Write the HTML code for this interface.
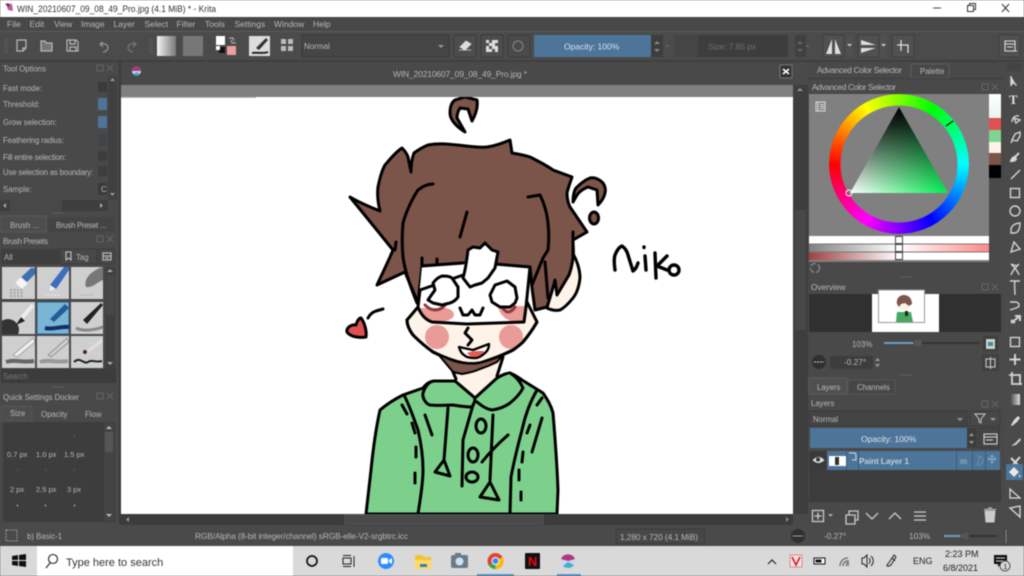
<!DOCTYPE html>
<html><head><meta charset="utf-8"><style>
html,body{margin:0;padding:0;width:1024px;height:576px;overflow:hidden;background:#4a4a4a}
#wrap{position:relative;width:1024px;height:576px;filter:blur(.5px);overflow:hidden}
svg{position:absolute;left:0;top:0}
text{font-family:"Liberation Sans",sans-serif;font-size:7.800px;fill:#b8b8b8}
#wheel{position:absolute;left:829px;top:94px;width:140px;height:140px;border-radius:50%;background:conic-gradient(from 270deg,#f00,#ff0,#0f0,#0ff,#00f,#f0f,#f00);-webkit-mask:radial-gradient(circle,transparent 58px,#000 59px);mask:radial-gradient(circle,transparent 58px,#000 59px)}
</style></head><body><div id="wrap">
<svg width="1024" height="576" viewBox="0 0 1024 576">
<defs>
<linearGradient id="bw" x1="0" x2="1" y1="0" y2="0"><stop offset="0" stop-color="#f4f4f4"/><stop offset="1" stop-color="#777"/></linearGradient>
<linearGradient id="s2" x1="0" x2="1"><stop offset="0" stop-color="#808080"/><stop offset=".5" stop-color="#fff"/><stop offset="1" stop-color="#f88"/></linearGradient>
<linearGradient id="s3" x1="0" x2="1"><stop offset="0" stop-color="#a04040"/><stop offset=".5" stop-color="#fff"/><stop offset="1" stop-color="#fff"/></linearGradient>
<linearGradient id="sw" x1="0" x2="0" y1="0" y2="1"><stop offset="0" stop-color="#fff"/><stop offset="1" stop-color="#e8f6ef"/></linearGradient>
<linearGradient id="ramp" x1="0" x2="1"><stop offset="0" stop-color="#444"/><stop offset="1" stop-color="#ddd"/></linearGradient>
<linearGradient id="tg" x1="0" x2="1"><stop offset="0" stop-color="#fff"/><stop offset="1" stop-color="#00ef50"/></linearGradient>
<linearGradient id="tb" x1="0" x2="0" y1="0" y2="1"><stop offset="0" stop-color="#000"/><stop offset=".2" stop-color="#000" stop-opacity=".85"/><stop offset="1" stop-color="#000" stop-opacity="0"/></linearGradient>
<clipPath id="cv"><rect x="122" y="97" width="671" height="417"/></clipPath>
<clipPath id="c1"><rect x="2" y="302" width="33" height="32"/></clipPath>
<clipPath id="cb"><rect x="435" y="312" width="90" height="10"/><rect x="400" y="324" width="170" height="40"/></clipPath>
</defs>

<!-- title bar -->
<rect width="1024" height="17" fill="#fff"/>
<path d="M6 3l6 1 1 7-5-1z" fill="#c05a9a"/><path d="M5 4l4 0 0 3z" fill="#333"/>
<text x="17" y="12" textLength="199" lengthAdjust="spacingAndGlyphs" style="font-size:9.600px;fill:#333">WIN_20210607_09_08_49_Pro.jpg (4.1 MiB)  * - Krita</text>
<path d="M933 8h8" stroke="#444"/><path d="M967.500 5.500h6v6h-6zM969.500 5.500v-2h6v6h-2" fill="none" stroke="#333"/><path d="M1002 4l7 8M1009 4l-7 8" stroke="#333" fill="none"/>

<!-- menu -->
<rect y="17" width="1024" height="14" fill="#484848"/>
<rect y="31" width="1024" height="1" fill="#5c5c5c"/>
<text x="7" y="27" style="font-size:8.500px">File</text><text x="29.500" y="27" style="font-size:8.500px">Edit</text><text x="54" y="27" style="font-size:8.500px">View</text><text x="81" y="27" style="font-size:8.500px">Image</text><text x="113.500" y="27" style="font-size:8.500px">Layer</text><text x="144.500" y="27" style="font-size:8.500px">Select</text><text x="176.500" y="27" style="font-size:8.500px">Filter</text><text x="205" y="27" style="font-size:8.500px">Tools</text><text x="234.500" y="27" style="font-size:8.500px">Settings</text><text x="274" y="27" style="font-size:8.500px">Window</text><text x="313" y="27" style="font-size:8.500px">Help</text>

<!-- toolbar -->
<rect y="32" width="1024" height="28" fill="#4b4b4b"/>
<rect y="60" width="1024" height="2" fill="#3f3f3f"/>
<path d="M5 39v16M7 39v16M150 39v16M152 39v16" stroke="#666" stroke-dasharray="1 1"/>
<g fill="none" stroke="#b8b8b8" stroke-width="1.200">
<path d="M17 40h9v8l-3 3h-6zM26 48h-3v3"/>
<path d="M41 41h4l1 2h6v8H41z" fill="#c8c8c8" fill-opacity=".35"/>
<path d="M67 40h9l2 2v9H67zM70 40v4h5v-4M70 51v-4h6v4"/>
<path d="M103 42l-3 2 3 3M100 44h4c5 0 6 7-1 8" stroke="#999"/>
<path d="M133 42l3 2-3 3M136 44h-4c-5 0-6 7 1 8" stroke="#777"/>
</g>
<rect x="157" y="36" width="19" height="20" fill="url(#bw)"/>
<rect x="183" y="36" width="20" height="20" fill="#777"/>
<rect x="216" y="36" width="9" height="9" fill="#fff"/>
<rect x="219" y="47" width="6" height="6" fill="#111"/><rect x="216" y="46" width="4" height="4" fill="#fff"/>
<rect x="227" y="46" width="9" height="9" fill="#eda0a0"/>
<path d="M229 38h4l1 3M236 43h-4l-1-3" stroke="#bbb" fill="none"/>
<rect x="249" y="36" width="21" height="20" fill="#ddd"/><path d="M252 53c5-1 12 1 16-1" stroke="#222" stroke-width="2" fill="none"/><path d="M256 48l10-10 2 2-9 10z" fill="#333"/>
<g fill="#bbb"><rect x="281" y="39" width="5" height="5"/><rect x="288" y="39" width="5" height="5"/><rect x="281" y="46" width="5" height="5"/><rect x="288" y="46" width="5" height="5"/></g>
<rect x="302" y="35" width="147" height="22" fill="#454545" stroke="#3a3a3a"/>
<text x="304" y="49" style="font-size:8px">Normal</text>
<path d="M438 45h6l-3 3z" fill="#999"/>
<rect x="454" y="35" width="22" height="22" fill="#4d4d4d" stroke="#3d3d3d"/><path d="M460 47l6-6 5 3-6 6zM459 50h12" fill="#ddd" stroke="#ddd" stroke-width=".8"/>
<rect x="481" y="35" width="22" height="22" fill="#4d4d4d" stroke="#3d3d3d"/><rect x="486" y="40" width="12" height="12" fill="#ddd"/><path d="M489 40h3v3h-3zM495 43h3v3h-3zM489 46h3v3h-3zM492 49h3v3h-3zM486 43h3v3h-3z" fill="#555"/>
<rect x="508" y="35" width="22" height="22" fill="#4a4a4a" stroke="#3d3d3d"/><circle cx="518" cy="46" r="5" fill="none" stroke="#888"/>
<rect x="534" y="35" width="117" height="22" fill="#4d7499"/>
<text x="564" y="49.500" style="font-size:8.500px;fill:#d8e2ec">Opacity:  100%</text>
<rect x="651" y="35" width="12" height="22" fill="#3d3d3d"/><path d="M654 44l3-3 3 3zM654 49h6l-3 3z" fill="#888"/><path d="M666 46h3" stroke="#777"/>
<rect x="674" y="35" width="114" height="22" fill="#3d3d3d"/><rect x="674" y="35" width="24" height="22" fill="#454545"/>
<text x="708" y="49.500" textLength="48" style="font-size:8.500px;fill:#6f6f6f">Size: 7.85 px</text>
<rect x="795" y="35" width="11" height="22" fill="#404040"/><path d="M797 44l3-3 3 3zM797 49h6l-3 3z" fill="#666"/><path d="M806 46h3" stroke="#777"/>
<rect x="823" y="35" width="21" height="22" fill="#505050" stroke="#3f3f3f"/><path d="M832 39v15h-6zM835 39v15h6z" fill="#ddd"/>
<rect x="846" y="35" width="7" height="22" fill="#505050"/><path d="M847 44h5l-2.500 2.500z" fill="#ccc"/>
<rect x="858" y="35" width="21" height="22" fill="#505050" stroke="#3f3f3f"/><path d="M861 40l15 5h-15zM861 48h15l-15 5z" fill="#ddd"/>
<rect x="880" y="35" width="7" height="22" fill="#505050"/><path d="M881 44h5l-2.500 2.500z" fill="#ccc"/>
<rect x="892" y="35" width="22" height="22" fill="#505050" stroke="#3f3f3f"/><path d="M901 40v11M897 45h11v8" fill="none" stroke="#ddd" stroke-width="1.300"/>
<rect x="999" y="35" width="21" height="22" fill="#505050" stroke="#3f3f3f"/><path d="M1005 41h10v10h-10zM1005 44h10M1007 47h6M1015 51h2" fill="none" stroke="#ddd" stroke-width="1.100"/>

<!-- left dock -->
<rect x="0" y="62" width="119" height="462" fill="#494949"/>
<rect x="119" y="62" width="2" height="462" fill="#3c3c3c"/>
<text x="3" y="71.500" textLength="43">Tool Options</text>
<g fill="none" stroke="#666"><rect x="97" y="65" width="6" height="6"/><path d="M107 65l6 6M113 65l-6 6"/><rect x="97" y="236" width="6" height="6"/><path d="M107 236l6 6M113 236l-6 6"/><rect x="97" y="393" width="6" height="6"/><path d="M107 393l6 6M113 393l-6 6"/></g>
<text x="3" y="91">Fast mode:</text><text x="3" y="107">Threshold:</text><text x="3" y="125">Grow selection:</text><text x="3" y="143" textLength="61">Feathering radius:</text><text x="3" y="160" textLength="63">Fill entire selection:</text><text x="3" y="175" textLength="90">Use selection as boundary:</text><text x="3" y="192">Sample:</text>
<rect x="98" y="82" width="9" height="10" fill="#3a3a3a"/><rect x="98" y="98" width="9" height="12" fill="#4d7499"/><rect x="98" y="116" width="9" height="12" fill="#4d7499"/><rect x="98" y="134" width="9" height="12" fill="#404548"/><rect x="98" y="151" width="9" height="10" fill="#3d3d3d"/><rect x="98" y="166" width="9" height="10" fill="#3d3d3d"/><rect x="98" y="183" width="9" height="12" fill="#3a3a3a"/>
<text x="101" y="192" style="font-size:8px">C</text>
<rect x="108" y="76" width="9" height="124" fill="#404040"/><path d="M110 81l2.500-3 2.500 3zM110 193h5l-2.500 3z" fill="#999"/>
<rect x="0" y="200" width="108" height="11" fill="#3e3e3e"/><rect x="10" y="200" width="52" height="11" fill="#484848"/><path d="M6 203v5l-3-2.500zM100 203v5l3-2.500z" fill="#aaa"/>
<path d="M52 213h12" stroke="#777" stroke-dasharray="1 1"/>
<rect x="1" y="216" width="45" height="16" fill="#4d4d4d" stroke="#5a5a5a"/>
<text x="10" y="228">Brush ...</text>
<rect x="48" y="217" width="67" height="15" fill="#444"/>
<text x="56" y="228" textLength="50">Brush Preset ...</text>
<text x="3" y="244" textLength="45">Brush Presets</text>
<rect x="1" y="249" width="59" height="15" fill="#3e3e3e"/><text x="4" y="260">All</text>
<rect x="61" y="249" width="36" height="15" fill="#484848" stroke="#3c3c3c"/><path d="M66 252h5v8l-2.500-2-2.500 2z" fill="none" stroke="#ccc"/><text x="76" y="260">Tag</text>
<rect x="99" y="249" width="15" height="15" fill="#484848" stroke="#3c3c3c"/><path d="M103 253h8v7h-8zM103 256h8M105 258h4" fill="none" stroke="#ccc"/>
<!-- presets -->
<g fill="#cfcfcf"><rect x="2" y="267" width="33" height="32"/><rect x="37" y="267" width="32" height="32"/><rect x="71" y="267" width="32" height="32"/><rect x="2" y="302" width="33" height="32"/><rect x="71" y="302" width="32" height="32"/><rect x="2" y="336" width="33" height="32"/><rect x="37" y="336" width="32" height="32"/><rect x="71" y="336" width="32" height="32"/></g>
<rect x="37" y="302" width="32" height="32" fill="#7ab5d6" stroke="#2c5d80"/>
<path d="M15 283l16-15h4v6l-14 14z" fill="#3f6fb0"/><path d="M15 283l7 6 6-6-7-6z" fill="#f4f4f4"/>
<path d="M10 290h14M10 293h14M10 296h14" stroke="#999" stroke-dasharray="2 1.500" stroke-width="1.500"/>
<path d="M50 285l14-18h5v3l-13 19z" fill="#3e6cc0"/><path d="M50 285l6 4-6 2z" fill="#eee"/><path d="M46 295h14" stroke="#fff" stroke-dasharray="1 2"/>
<path d="M86 287c-3-8 6-17 17-20v13c-6 2-10 8-17 7z" fill="#777"/><path d="M80 295h14" stroke="#aaa" stroke-dasharray="1 2" stroke-width="2"/>
<g clip-path="url(#c1)"><circle cx="8" cy="330" r="11" fill="#333"/><path d="M20 320l13-15" stroke="#eee" stroke-width="4"/><path d="M16 325l5-8 4 4z" fill="#222"/></g>
<path d="M50 319l15-15 4 4-15 14z" fill="#245c99"/><path d="M45 328c8 2 16-2 24-1" stroke="#10306a" stroke-width="4" fill="none"/>
<path d="M83 320l18-17 2 2-16 19z" fill="#222"/><path d="M76 328c8 4 18 2 27-1" stroke="#888" stroke-width="3" fill="none"/>
<path d="M13 355l20-17 2 4-18 15z" fill="#eee" stroke="#888" stroke-width=".6"/><path d="M6 362c8-3 18 1 28-1" stroke="#666" stroke-width="4" fill="none"/>
<path d="M48 355l19-17 2 4-18 15z" fill="#ccc" stroke="#777" stroke-width=".6"/><path d="M40 362c8-3 18 1 28-1" stroke="#999" stroke-width="4" fill="none"/>
<path d="M84 352l18-14 1 4-16 12z" fill="#ddd"/><circle cx="85" cy="352" r="2" fill="#522"/><path d="M74 362c6-6 10 3 14 0s8 1 14-1" stroke="#222" stroke-width="2" fill="none"/>
<rect x="105" y="267" width="10" height="102" fill="#3f3f3f"/><rect x="106" y="275" width="8" height="40" fill="#484848"/><path d="M107 272l3-3 3 3zM107 362h6l-3 3z" fill="#aaa"/>
<rect x="1" y="369" width="115" height="14" fill="#3c3c3c"/><text x="3" y="379" style="fill:#777">Search</text>
<path d="M53 387h12" stroke="#777" stroke-dasharray="1 1"/>
<text x="3" y="400" textLength="76">Quick Settings Docker</text>
<rect x="1" y="406" width="31" height="15" fill="#4d4d4d" stroke="#555"/>
<text x="10" y="416">Size</text><text x="41" y="417">Opacity</text><text x="85" y="417">Flow</text>
<rect x="3" y="422" width="112" height="100" fill="#3d3d3d"/>
<text x="7" y="457" style="font-size:7.500px">0.7 px</text><text x="36" y="457" style="font-size:7.500px">1.0 px</text><text x="64" y="457" style="font-size:7.500px">1.5 px</text><text x="10" y="492" style="font-size:7.500px">2 px</text><text x="36" y="492" style="font-size:7.500px">2.5 px</text><text x="67" y="492" style="font-size:7.500px">3 px</text>
<path d="M17 505.500h1M45 505.500h1M74 505.500h1" stroke="#ddd" stroke-width="1.500"/>
<path d="M74 436h1M17 470h1M45 470h1M74 470h1" stroke="#777"/>
<rect x="104" y="423" width="10" height="98" fill="#444"/><rect x="105" y="432" width="8" height="20" fill="#555"/><path d="M106 429l3-3 3 3zM106 514h6l-3 3z" fill="#bbb"/>

<!-- canvas -->
<rect x="121" y="62" width="672" height="23" fill="#494949"/>
<circle cx="136.500" cy="71" r="4.500" fill="#d4d4f0"/><path d="M132 71a4.500 4.500 0 0 1 9 0z" fill="#b0387a"/><path d="M133 74a4.500 4.500 0 0 0 7 0l-3-2z" fill="#35b6c8"/>
<text x="393" y="77" textLength="134" style="font-size:8.500px;fill:#b4b4b4">WIN_20210607_09_08_49_Pro.jpg *</text>
<rect x="780" y="65" width="12" height="13" fill="#333" stroke="#777"/><path d="M783 69l6 5M789 69l-6 5" stroke="#fff" stroke-width="1.600"/>
<rect x="121" y="85" width="672" height="429" fill="#fff"/>
<rect x="121" y="85" width="672" height="12" fill="#808080"/>
<rect x="121" y="97" width="135" height="1" fill="#bbb"/>

<g clip-path="url(#cv)" stroke="#000" stroke-width="3" stroke-linejoin="round" stroke-linecap="round">
<!-- ear -->
<path d="M572 252c5 8 8 18 8 26-1 9-3 15-7 20-4 5-9 10-13 12-5 1-9 0-13-2l10-40z" fill="#fdf3e8"/>
<!-- neck -->
<path d="M441 353l14 26 18 18 24-19 7-20-30 6z" fill="#fdf3e8" stroke="none"/>
<!-- face -->
<path d="M418 307l-11 13c0 6 3 11 6 15 6 6 13 12 20 17 10 5 20 9 30 11 7 1 14 1 20-1 10-3 20-7 30-12 4-3 7-5 10-8 5-6 10-13 14-20l-10-20H420z" fill="#fdf3e8"/>
<!-- lower blush -->
<g stroke="none" fill="#e99b98" clip-path="url(#cb)"><circle cx="437" cy="337" r="12"/><circle cx="511" cy="337" r="12"/></g>
<path d="M407 320c0 6 3 11 6 15 6 6 13 12 20 17 10 5 20 9 30 11 7 1 14 1 20-1 10-3 20-7 30-12 4-3 7-5 10-8 5-6 10-13 14-20" fill="none"/>
<!-- neck shadow -->
<path d="M438 354c8 4 16 8 25 9 7 1 14 1 20-1 7-2 14-4 20-7l-6 7c-6 3-11 5-17 7-6 3-12 4-18 5l-9-2z" fill="#7b5549" stroke-width="2"/>
<path d="M503 357l-6 19M453 372l3 7" fill="none"/>
<!-- hair -->
<path d="M350 197C360 203 370 207 380 211C378 203 377 195 378 187C380 177 382 170 385 165C391 158 396 152 402 148C405 151 407 154 408 157L411 172C411 165 412 158 414 153C418 150 423 147 428 145C438 143 448 144 457 145C468 146 478 148 487 147C495 146 503 143 510 140L512 153C518 154 524 155 530 157C538 161 546 165 553 170L572 177C570 183 568 188 567 193C567 198 568 203 570 207L587 232L573 240C573 247 574 252 573 258C572 265 571 270 569 275L557 295L555 280C553 288 550 298 547 307L535 310L532 288L530 267L463 263L422 266L418 303L405 272L377 285C383 272 388 262 393 250Z" fill="#7b5549"/>
<!-- mask -->
<path d="M422 266L463 263L530 267L526 307L524 322L467 324L432 322L418 307Z" fill="#fff" stroke="none"/>
<g stroke="none" fill="#e99b98"><path d="M419 308h27a14 7 0 0 1-13 13h-5z"/><path d="M498 306h28l-2 15h-13c-7-2-12-8-13-15z"/></g>
<path d="M422 266L463 263M495 264L530 267L526 307L524 322L467 324L432 322C426 320 421 315 418 307L420 290z" fill="none"/>
<path d="M468 250L473 247L480 248L485 243L492 250L498 252L495 268L488 278L482 283L475 285L470 287L463 278C466 268 467 258 468 250Z" fill="#fff"/>
<path d="M425 305c3 3 6 5 10 5s8-2 10-5M502 307c2 3 4 5 6 5 3 0 5-2 7-5" fill="none" stroke="#8a3a3a"/>
<path d="M428 300L430 297L435 290L433 283C436 279 439 277 442 276C446 276 449 276 452 278L458 287L458 297C456 300 453 302 450 303L442 305L433 303Z" fill="#fff"/>
<path d="M490 295L495 285L507 281L515 287L517 298L515 303L510 307L500 307L492 302Z" fill="#fff"/>
<path d="M460 308L463 315L468 315L472 310L475 315L480 315L483 308" fill="none"/>
<path d="M468 328L465 333L472 340L468 345" fill="none"/>
<path d="M459 347L473 350L489 344C489 347 488 350 486 352C483 355 479 358 475 358C470 358 466 357 464 355C461 353 460 350 459 347Z" fill="#fff" stroke-width="2.400"/>
<path d="M467 353C471 351 479 351 484 351C482 355 478 357 475 357C471 357 469 355 467 353Z" fill="#e45a50" stroke="none"/>
<!-- hair lines -->
<path d="M433 184C428 184 423 186 418 190C412 199 406 212 403 223C402 234 402 246 403 257C405 272 411 288 417 303" fill="none"/>
<path d="M528 197L540 195C544 203 547 213 548 223C549 232 549 241 548 250L543 258L532 285M545 262L548 298" fill="none"/>
<path d="M467 212L460 237M396 242L395 250M573 232L573 256M422 258V266M437 259V264" fill="none"/>
<!-- hoodie -->
<path d="M366 514l5-44c2-20 5-42 9-60 7-6 15-11 23-15l20-7c3-4 7-7 12-7l20 0 20 17 22-20c5-3 9-5 13-5 5 2 8 4 12 7l21 13c4 6 8 12 10 20 2 24 4 50 5 77l-1 24z" fill="#7dd08c"/>
<path d="M423 393c-1 5 3 11 7 12 8 1 16 0 23 0 6 1 12 2 19 2 2-3 3-6 3-9l-20-17-20 0c-5 0-9 3-12 12zM477 402c5 4 9 7 15 8 8-1 14-4 18-7 5-4 10-9 13-15-3-7-8-12-13-15" fill="#7dd08c"/>
<path d="M405 397c5 10 9 22 13 33 3 13 5 27 5 40 0 15-3 30-5 44M537 390c-7 12-12 26-15 40-4 15-8 31-11 47l-1 37" fill="none"/>
<path d="M402 405l5 9M412 423l3 10M416 447v10M415 473v10M425 415l7 20M542 398l-5 7M530 425l-3 8M523 452l-1 10M519 470v10M521 492v8M542 418l-10 34" fill="none"/>
<path d="M448 408l-4 52M473 405l-10 35-1 46M493 415l-3 65M508 435c-8 7-18 17-26 27" fill="none"/>
<path d="M444 460l-9 12 15 4zM490 482l-10 15 19 3z" fill="#7dd08c"/>
<ellipse cx="481" cy="426" rx="5" ry="7" fill="#7dd08c"/><ellipse cx="473" cy="455" rx="5" ry="7" fill="#7dd08c"/><ellipse cx="472" cy="477" rx="6" ry="5" fill="#7dd08c"/>
<!-- curl, mark -->
<path d="M465 132c-8-5-15-12-15-19 0-7 2-11 5-13l10-3 12 3c1 6 0 12-5 21l-4-12-8-1c-2 3-3 6-3 10z" fill="#7b5549"/>
<path d="M573 202c0-6 1-11 3-14 5-5 9-8 14-10 5-1 9 1 13 5 2 3 3 7 2 10-1 5-4 9-7 12l-1-15-9-3c-5 2-9 5-11 8z" fill="#7b5549"/>
<ellipse cx="594" cy="218" rx="4.500" ry="6" fill="#7b5549"/>
<!-- heart -->
<path d="M347 332c-1-4 4-8 9-7 1-4 3-7 5-7 3 4 6 12 5 19-6 1-16 0-19-5z" fill="#e05050"/>
<path d="M368 318c2-4 5-6 8-7l7-2" fill="none"/>
<!-- Niko -->
<g fill="none" stroke-width="3.400">
<path d="M615 270C614 263 614 258 615 255C617 250 619 247 622 246C625 248 627 251 628 255L633 271C636 269 637 266 638 263"/>
<path d="M645 256L646 270M644 247v.5"/>
<path d="M655 253L656 278M667 256L657 266L667 270"/>
<ellipse cx="674" cy="270" rx="5" ry="5"/>
</g>
</g>

<!-- canvas scrollbars -->
<rect x="121" y="514" width="672" height="11" fill="#3c3c3c"/>
<rect x="345" y="515" width="198" height="9" fill="#4a4a4a" stroke="#555"/>
<path d="M129 517v5l-3-2.500z" fill="#999"/>
<path d="M786 517v5l3-2.500z" fill="#888"/>
<rect x="793" y="85" width="15" height="440" fill="#3e3e3e"/>
<rect x="795" y="210" width="11" height="120" fill="#484848"/>
<path d="M797 91l3-3 3 3z" fill="#999"/>
<rect x="793" y="514" width="15" height="11" fill="#494949"/>

<!-- status bar -->
<rect y="525" width="1024" height="21" fill="#4a4a4a"/>
<rect x="6" y="530" width="11" height="11" fill="none" stroke="#999" stroke-dasharray="2 1"/>
<text x="27" y="539">b) Basic-1</text>
<text x="195" y="539" textLength="213" style="font-size:8.300px">RGB/Alpha (8-bit integer/channel)  sRGB-elle-V2-srgbtrc.icc</text>
<rect x="616" y="529" width="89" height="15" fill="#474747" stroke="#3c3c3c"/><text x="620" y="540" textLength="78" style="font-size:8.300px">1,280 x 720 (4.1 MiB)</text>
<circle cx="798" cy="536" r="7" fill="#303030"/><path d="M793 536h10" stroke="#ccc" stroke-dasharray="2 1"/>
<text x="824" y="539" style="font-size:8.300px">-0.27°</text>
<text x="909" y="539" style="font-size:8.300px">103%</text>
<path d="M944 536h17" stroke="#6d9dc5" stroke-width="2"/><path d="M967 536h30" stroke="#333" stroke-width="2"/>
<rect x="961" y="532" width="8" height="8" fill="#555" stroke="#444"/>
<rect x="1005" y="529" width="13" height="15" fill="#cfd8dc" stroke="#333"/><rect x="1009" y="534" width="5" height="5" fill="#3b8a55"/>

<!-- right dock -->
<rect x="808" y="62" width="197" height="463" fill="#494949"/>
<rect x="1005" y="62" width="19" height="463" fill="#4a4a4a"/>
<text x="817" y="73" textLength="85" style="font-size:8.300px">Advanced Color Selector</text>
<rect x="911" y="64" width="38" height="14" fill="#484848" stroke="#5c5c5c"/>
<text x="920" y="74">Palette</text>
<rect x="808" y="78" width="197" height="1" fill="#3d3d3d"/>
<text x="812" y="90" textLength="84" style="font-size:8.300px">Advanced Color Selector</text>
<g fill="none" stroke="#666"><rect x="982" y="84" width="6" height="6"/><path d="M992 84l6 6M998 84l-6 6"/><rect x="982" y="284" width="6" height="6"/><path d="M992 284l6 6M998 284l-6 6"/><rect x="982" y="401" width="6" height="6"/><path d="M992 401l6 6M998 401l-6 6"/></g>
<rect x="809" y="94" width="180" height="168" fill="#808080"/>
<path d="M816 102h9v9h-9zM818 102v9M820 104.500h4M820 106.500h4M820 108.500h4" stroke="#ddd" fill="none"/>
<rect x="989" y="94" width="12" height="24" fill="url(#sw)"/><rect x="989" y="118" width="12" height="12" fill="#e05050"/><rect x="989" y="130" width="12" height="12" fill="#7fd494"/><rect x="989" y="142" width="12" height="11" fill="#fdf3e8"/><rect x="989" y="153" width="12" height="12" fill="#7b5549"/><rect x="989" y="165" width="12" height="13" fill="#000"/>
<rect x="809" y="236" width="180" height="8" fill="#fff"/><rect x="809" y="244" width="180" height="8" fill="url(#s2)"/><rect x="809" y="252" width="180" height="8" fill="url(#s3)"/>
<rect x="809" y="243.500" width="180" height="1" fill="#777"/><rect x="809" y="251.500" width="180" height="1" fill="#777"/>
<g fill="#fff" stroke="#444"><rect x="895.500" y="236.500" width="7" height="7"/><rect x="895.500" y="244.500" width="7" height="7"/><rect x="895.500" y="252.500" width="7" height="7"/></g>
<circle cx="815" cy="268" r="4.500" fill="none" stroke="#888" stroke-width="1.300" stroke-dasharray="6 2"/>
<path d="M900 277h12" stroke="#777" stroke-dasharray="1 1"/>
<text x="811" y="290" style="font-size:8.300px">Overview</text>
<rect x="809" y="294" width="192" height="38" fill="#303030"/>
<rect x="872" y="294" width="67" height="38" fill="#fff"/>
<rect x="878.500" y="290" width="46" height="32.500" fill="#fff" stroke="#999"/>
<path d="M896 322l1-10 14 0 2 10z" fill="#46a85e"/>
<circle cx="904" cy="306" r="5" fill="#fdf3e8"/>
<path d="M897 304c-1-6 3-9 7-9s8 3 8 9l-3 2-4-3-4 1-2 3z" fill="#7b5549"/>
<rect x="905" y="311" width="3" height="5" fill="#222"/>
<text x="852" y="347" style="font-size:8px">103%</text>
<path d="M884 343h30" stroke="#6d9dc5" stroke-width="2"/><path d="M920 343h60" stroke="#333" stroke-width="2"/>
<rect x="914" y="339" width="8" height="8" fill="#555" stroke="#444"/>
<rect x="983" y="336" width="15" height="15" fill="#3d3d3d"/><rect x="986" y="339" width="9" height="10" fill="#c8d4c8"/><rect x="988" y="342" width="5" height="4" fill="#4a8a9a"/>
<circle cx="819" cy="362" r="7" fill="#303030"/><path d="M814 362h10" stroke="#ccc" stroke-dasharray="2 1"/>
<rect x="830" y="356" width="43" height="13" fill="#3d3d3d"/><text x="844" y="365" style="font-size:8.300px">-0.27°</text>
<path d="M875 361l2.500-3 2.500 3zM875 364h5l-2.500 3z" fill="#999"/>
<rect x="983" y="355" width="15" height="15" fill="#454545" stroke="#3a3a3a"/><path d="M986 359h9v8h-9zM990.500 357v12" fill="none" stroke="#ccc"/>
<path d="M900 375h12" stroke="#777" stroke-dasharray="1 1"/>
<rect x="809" y="378" width="38" height="16" fill="#4f4f4f" stroke="#5a5a5a"/>
<text x="817" y="390">Layers</text>
<rect x="848" y="380" width="47" height="14" fill="#464646" stroke="#555"/>
<text x="857" y="390">Channels</text>
<text x="811" y="406">Layers</text>
<rect x="809" y="411" width="158" height="15" fill="#444" stroke="#3a3a3a"/><text x="813" y="422">Normal</text><path d="M957 418h6l-3 3z" fill="#999"/>
<rect x="970" y="411" width="30" height="15" fill="#484848" stroke="#3a3a3a"/><path d="M975 414h10l-4 5v4l-2-1v-3z" fill="none" stroke="#ccc"/><path d="M990 418h6l-3 3z" fill="#999"/>
<rect x="810" y="428" width="157" height="20" fill="#4d7499"/>
<text x="861" y="442" style="font-size:8.500px;fill:#dde6ee">Opacity:  100%</text>
<rect x="967" y="428" width="10" height="20" fill="#3d3d3d"/><path d="M969 436l2.500-3 2.500 3zM969 441h5l-2.500 3z" fill="#999"/>
<rect x="979" y="428" width="20" height="20" fill="#454545" stroke="#3a3a3a"/><path d="M984 434h13v10h-13zM984 437h13M986 440h7" fill="none" stroke="#ddd"/>
<rect x="809" y="451" width="18" height="19" fill="#3a3a3a"/>
<path d="M812.500 460c4-4 8-4 12 0-4 4-8 4-12 0z" fill="#ddd"/><circle cx="818" cy="459.500" r="2" fill="#333"/>
<rect x="827" y="451" width="173" height="19" fill="#4d7499"/>
<rect x="829" y="456" width="17" height="10" fill="#fff"/><rect x="835" y="457" width="4" height="8" fill="#332"/>
<path d="M846.500 451v19M858.500 451v19M956.500 451v19M972.500 451v19M985.500 451v19" stroke="#3c5c7a"/>
<path d="M849 453h6l1 2v5h-4" fill="none" stroke="#ddd"/>
<text x="859" y="464" textLength="50" style="font-size:8.300px;font-weight:bold;fill:#c0ccd6">Paint Layer 1</text>
<rect x="960" y="459" width="7" height="5" fill="#6f8faa"/><path d="M977 456c4 0 6 3 6 5s-3 4-6 4M980 456l-3 9" stroke="#6f8faa" fill="none"/>
<path d="M988 459h9M992 455v9" stroke="#7fa3c0" stroke-width="3" stroke-dasharray="2 1"/>
<rect x="809" y="470" width="192" height="32" fill="#3c3c3c"/>
<g fill="none" stroke="#ccc" stroke-width="1.300"><path d="M812.500 510.500h11v11h-11zM818 512.500v7M814.500 516h7"/><path d="M846 515h9v9h-9z"/><path d="M849 515v-4h9v9h-3"/><path d="M866 513l6 6 6-6M889 519l6-6 6 6M914 512h12M914 516h12M914 520h12"/></g>
<path d="M828 514h5l-2.500 3z" fill="#aaa"/>
<path d="M985 511h10l-1 11h-8zM984 509.500h12M988 508h4" fill="#ccc" stroke="#ccc"/>

<!-- toolbox -->
<rect x="1006" y="63" width="16" height="8" fill="#444"/>
<g fill="none" stroke="#d4d4d4" stroke-width="1.400">
<path d="M1011 76v9l2.500-2.500 3 3" fill="#ddd"/>
<text x="1009" y="104" style="font-size:13px;font-family:'Liberation Serif',serif;fill:#ddd;stroke:none;font-weight:bold">T</text>
<path d="M1012 122c0-4 3-7 7-6M1014 118l6 2-4 3z"/>
<path d="M1012 140l3-6 5-2 0 4-3 5zM1012 141l-1 2"/>
<path d="M1019 153l-4 4M1011 161c1-3 2-4 4-4l1 2c-1 2-3 2-5 2z" fill="#ddd" stroke-width="2"/>
<path d="M1011 179l9-9"/>
<rect x="1010.500" y="188.500" width="9" height="9"/>
<circle cx="1015" cy="211" r="5"/>
<path d="M1011 229c1-4 5-6 9-6 0 4-1 9-5 10h-4z"/>
<path d="M1011 252l3-10 6 7z"/>
<path d="M1011 264c3 1 6 3 8 0M1011 275c1-4 5-8 8-11M1019 275c-1-4-5-8-8-11"/>
<path d="M1010 281h10M1015 281c-1 4 0 8 0 14"/>
<path d="M1010 302h6c4 1 4 5 0 6l-6 2"/>
<path d="M1011 323l9-7M1015 316h5v5M1011 320l4 3" stroke-width="2"/>
<rect x="1010.500" y="337.500" width="9" height="9"/>
<path d="M1015 354v11M1009.500 359.500h11" stroke-width="2"/>
<path d="M1012 372v12h10M1009 375h11v10" stroke-width="1.800"/>
</g>
<rect x="1010" y="394" width="10" height="11" fill="url(#ramp)"/>
<path d="M1011 425l3-5 4-4 2 2-3 4-5 4z" fill="#ddd"/>
<path d="M1011 446l4-3 5-5 1 2-5 5z" fill="#ccc"/>
<path d="M1011 458l8 8M1020 457l-9 10" stroke="#ddd" stroke-width="2"/>
<rect x="1006" y="464" width="17" height="16" fill="#4d7499"/>
<path d="M1009 472l5-5 5 5-5 5z" fill="#e8e8e8"/><path d="M1019 474l2 3h-2z" fill="#e8e8e8"/>
<path d="M1010 498l10 0-10-9z" fill="none" stroke="#ddd" stroke-width="1.200"/>
<path d="M1020 507v11l-10-9z" fill="none" stroke="#ddd" stroke-width="1.300" transform="translate(0 -1)"/>
<rect x="1006" y="525" width="18" height="21" fill="#4a4a4a"/>

<!-- taskbar -->
<rect y="546" width="1024" height="30" fill="#d9d9d9"/>
<path d="M12 556l6-1v5h-6zM19 555l7-1v6h-7zM12 561h6v5l-6-1zM19 561h7v6l-7-1z" fill="#111"/>
<rect x="37" y="546" width="256" height="30" fill="#fff"/>
<circle cx="53" cy="559" r="4.500" fill="none" stroke="#222" stroke-width="1.100"/><path d="M50 563l-4 5" stroke="#222" stroke-width="1.100"/>
<text x="66" y="566" style="font-size:11px;fill:#333">Type here to search</text>
<circle cx="312" cy="561" r="5" fill="none" stroke="#111" stroke-width="1.700"/>
<path d="M343 555.500h8M343 566.500h8" stroke="#222"/><rect x="343" y="558" width="8" height="6" fill="none" stroke="#222"/><path d="M354 556v11" stroke="#222"/>
<circle cx="386" cy="561" r="8" fill="#2d8cff"/><rect x="381" y="558" width="7" height="6" rx="1" fill="#fff"/><path d="M389 560l3-2v6l-3-2z" fill="#fff"/>
<path d="M415 555h7l2 2h7v12h-16z" fill="#f4c430"/><rect x="415" y="560" width="16" height="9" fill="#ffd966"/><rect x="420" y="564" width="7" height="3" fill="#2f7fc4"/>
<rect x="451" y="555" width="17" height="13" rx="2" fill="#6a7b88"/><rect x="455" y="553" width="6" height="3" fill="#6a7b88"/><circle cx="459.500" cy="561.500" r="4" fill="#cfe0ee"/>
<circle cx="495.500" cy="561" r="8" fill="#e34133"/><path d="M495.500 561l-7 4a8 8 0 0 0 8 4z" fill="#36a853"/><path d="M495.500 561l0 8a8 8 0 0 0 7-12z" fill="#fbbc04"/><circle cx="495.500" cy="561" r="3.500" fill="#4285f4" stroke="#fff"/>
<rect x="525" y="553" width="15" height="16" rx="1" fill="#111"/><text x="528" y="566" style="font-size:13px;font-weight:bold;fill:#e50914">N</text>
<circle cx="568" cy="561" r="7.500" fill="#d4d4f0"/><path d="M561 559a7.500 7.500 0 0 1 14 0l-7 2z" fill="#b0387a"/><path d="M563 566a7.500 7.500 0 0 0 11-1l-6-3z" fill="#35b6c8"/>
<rect x="557" y="574" width="24" height="2" fill="#5e97c8"/>
<rect x="477" y="574" width="37" height="2" fill="#5e97c8"/>
<path d="M768 564l4-4 4 4" fill="none" stroke="#222" stroke-width="1.200"/>
<rect x="790" y="555" width="12" height="12" fill="#f8e2e2" stroke="#d88"/><path d="M792 557l4 8 4-8" fill="none" stroke="#c22" stroke-width="1.600"/>
<rect x="814" y="558" width="11" height="6" fill="#fff" stroke="#111"/><rect x="815.500" y="559.500" width="6" height="3" fill="#111"/>
<path d="M840 566c0-4 3-8 8-8M843 566c0-3 2-5 5-5M846 566c0-1 1-2 2-2" fill="none" stroke="#555"/><path d="M846 560h3v6h-3z" fill="#888"/>
<path d="M862 558h2l3-3v12l-3-3h-2zM869 558c1.500 2 1.500 4 0 6M871 556c3 3 3 7 0 10" fill="none" stroke="#222"/>
<path d="M889 566c-2 1-3-1-1-2l6-9 2 2-5 8z" fill="none" stroke="#222"/><path d="M892 558l3 3" stroke="#222"/>
<text x="913" y="564" style="font-size:9px;fill:#222">ENG</text>
<text x="945" y="557" style="font-size:9px;fill:#222">2:23 PM</text>
<text x="943" y="571" style="font-size:9px;fill:#222">6/8/2021</text>
<path d="M994 555h13v9h-6l-3 3v-3h-4z" fill="#111"/><path d="M996 558h9M996 561h9" stroke="#d9d9d9"/>
<circle cx="1005" cy="566" r="5" fill="#d9d9d9" stroke="#555"/><text x="1003.300" y="569" style="font-size:7.500px;fill:#222">1</text>
</svg>
<div id="wheel"></div>
<svg width="1024" height="576" viewBox="0 0 1024 576" style="pointer-events:none">
<path d="M899 107L850 193H948Z" fill="url(#tg)"/>
<path d="M899 107L850 193H948Z" fill="url(#tb)"/>
<path d="M946 126l7-5" stroke="#000" stroke-width="1.200"/>
<circle cx="849" cy="193" r="3" fill="none" stroke="#fff"/>
</svg>
</div></body></html>
